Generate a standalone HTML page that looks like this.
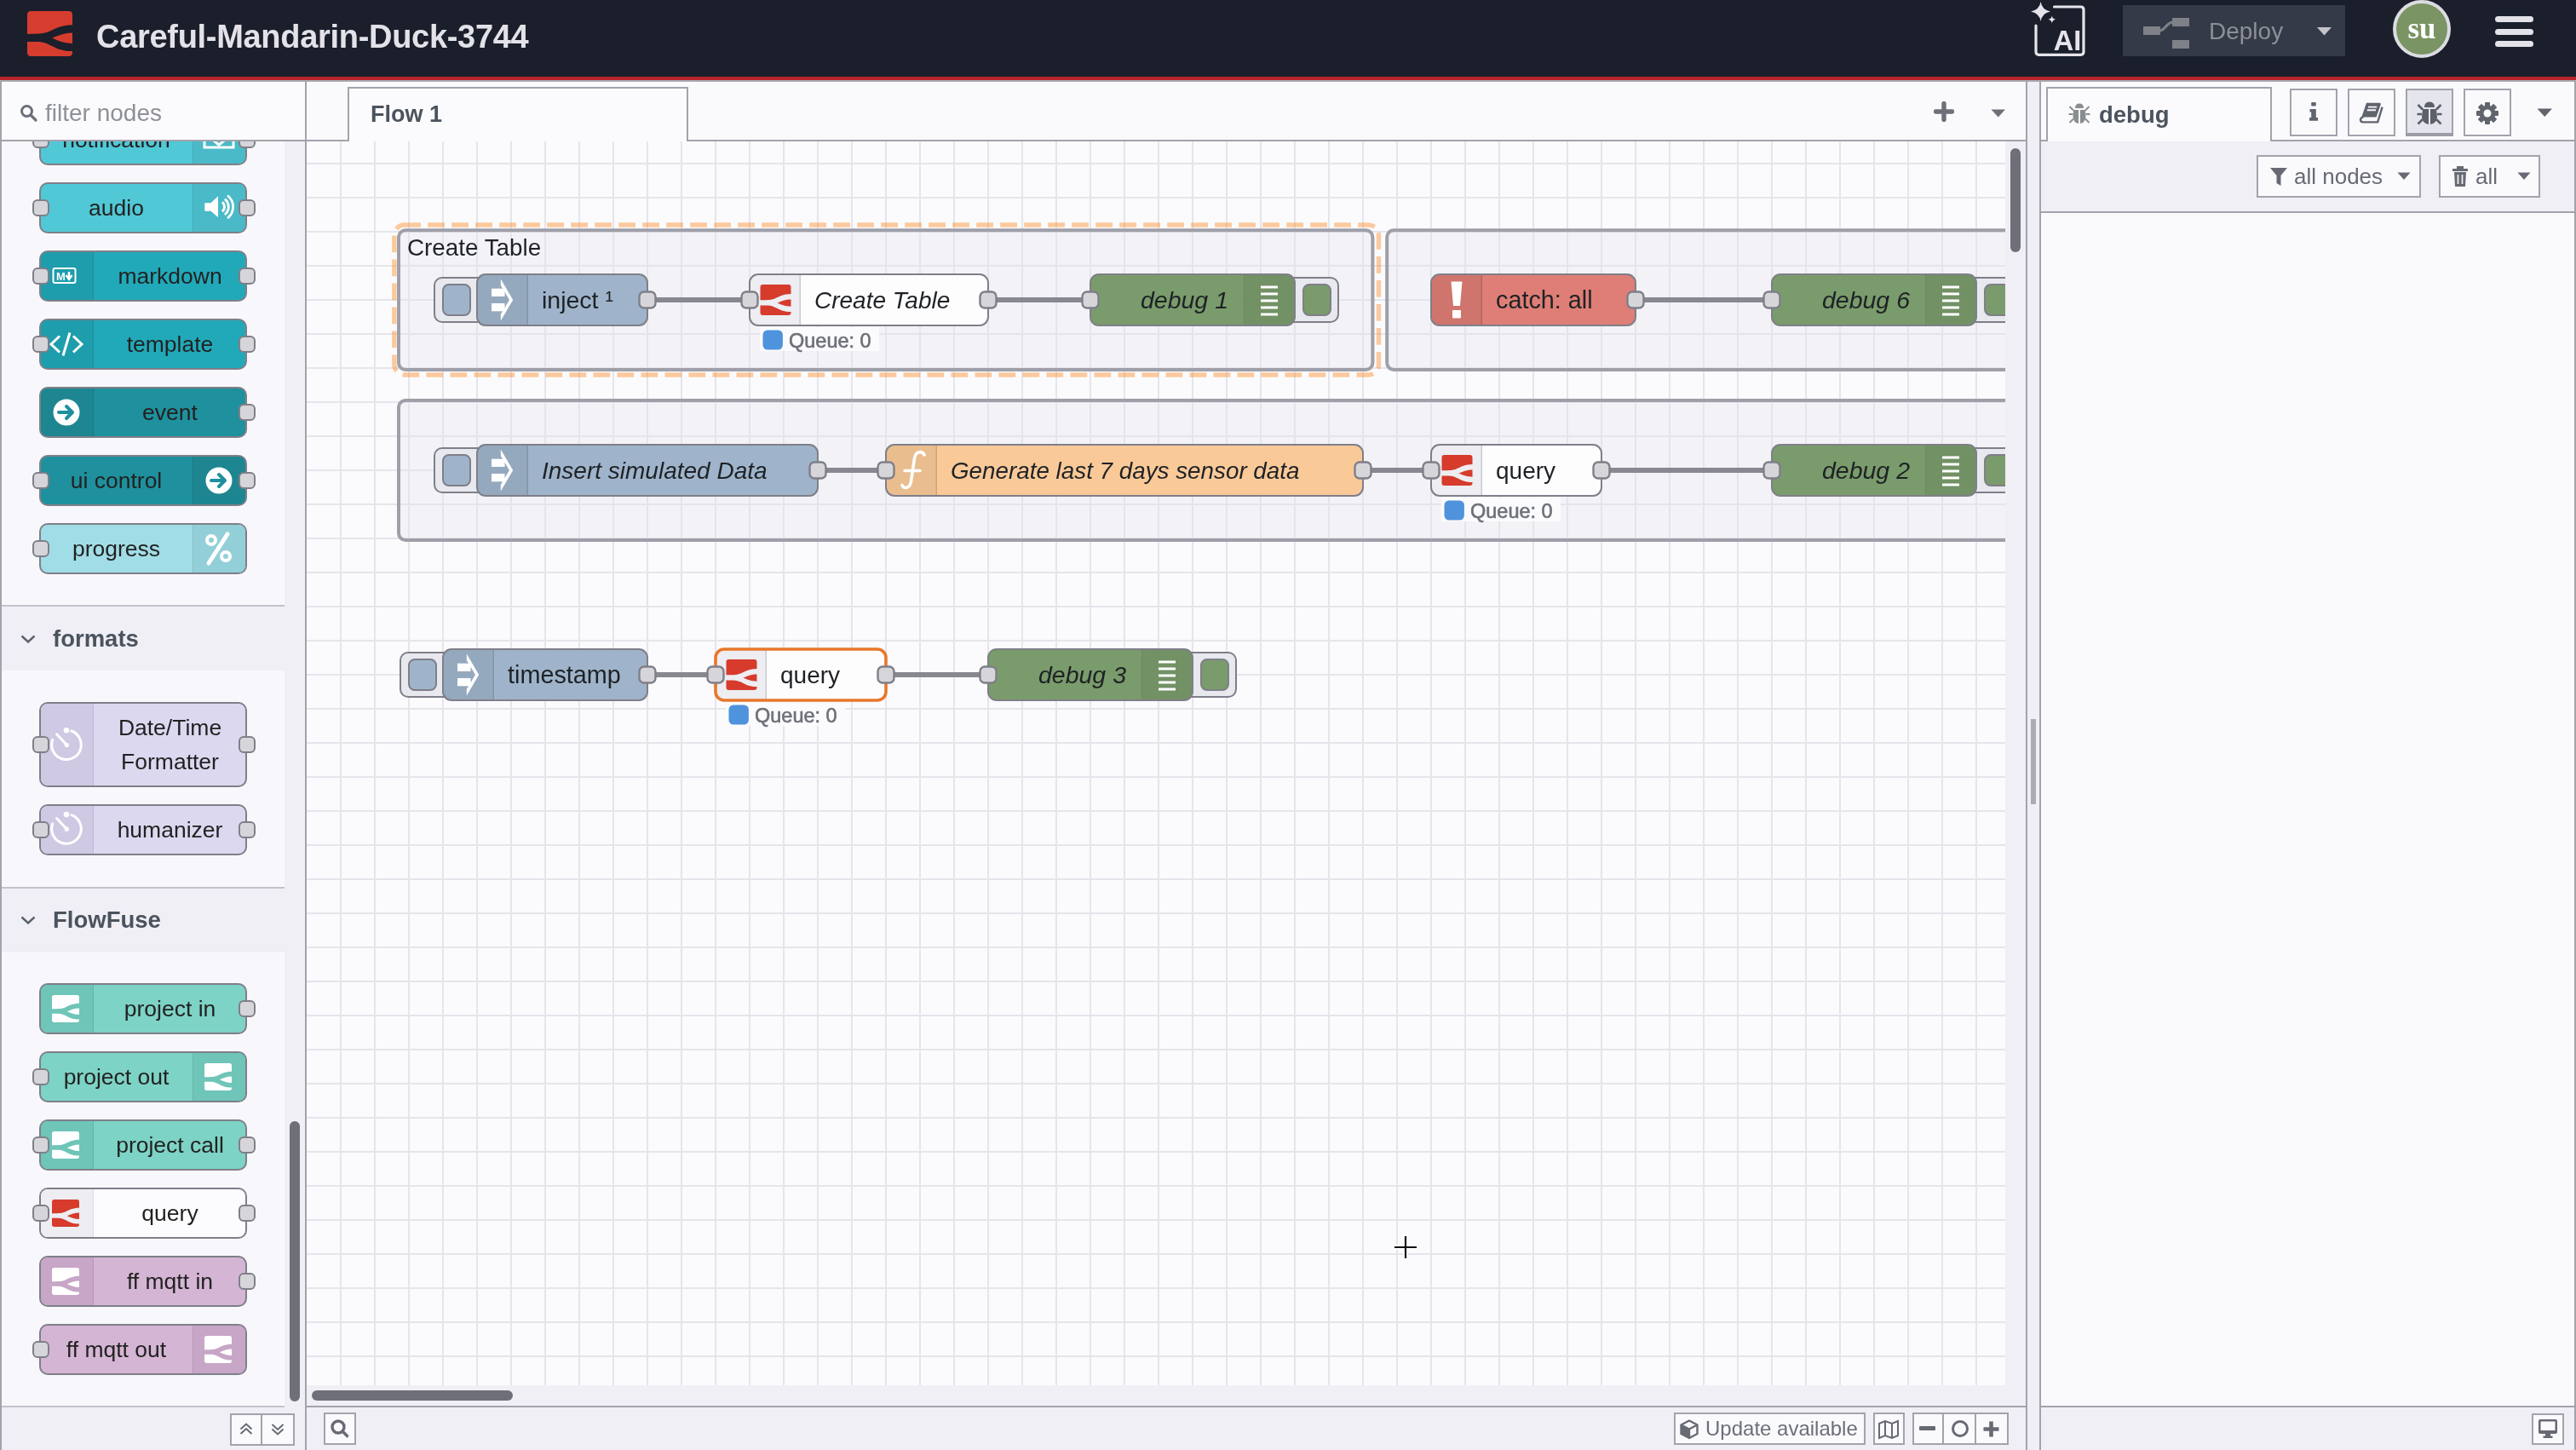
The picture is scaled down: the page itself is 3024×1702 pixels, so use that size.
<!DOCTYPE html>
<html><head><meta charset="utf-8"><style>
html,body{margin:0;padding:0;width:3024px;height:1702px;overflow:hidden;background:#f8f8fc;font-family:'Liberation Sans', sans-serif}
body>div,body>svg{will-change:transform}
</style></head><body>
<div style="position:absolute;left:0;top:0;width:3024px;height:90px;background:#1a1f2b;"></div>
<div style="position:absolute;left:0;top:90px;width:3024px;height:4px;background:#b9232b;"></div>
<svg style="position:absolute;left:32px;top:13px" width="53" height="53" viewBox="0 0 36 36"><g transform="translate(0,0) scale(1.0)" fill="#d63d2e"><path d="M0,3 Q0,0 3,0 L33,0 Q36,0 36,3 L36,11 C28,11 22,14 18,16 C14,18 10,18.3 0,18.3 Z"/><path d="M36,17.4 C30,17.4 24,19.6 20,21.6 C24,23.6 30,25.8 36,25.8 Z"/><path d="M0,24.4 L8,24.4 C13,24.4 16,26 20,28 C24,30 28,32 36,32 L36,33 Q36,36 33,36 L3,36 Q0,36 0,33 Z"/></g></svg>
<div style="position:absolute;left:113px;top:15px;height:56px;font:bold 38px 'Liberation Sans', sans-serif;line-height:56px;letter-spacing:-0.3px;color:#e2e2e8;white-space:nowrap">Careful-Mandarin-Duck-3744</div>

<svg style="position:absolute;left:2380px;top:0px" width="72" height="70" viewBox="0 0 72 70">
<path d="M15.6,2 Q17,11.5 27,13.4 Q17,15.3 15.6,25 Q14.2,15.3 4,13.4 Q14.2,11.5 15.6,2 Z" fill="#e4e4ea"/>
<path d="M28.8,18.5 Q29.4,22.2 33.3,22.8 Q29.4,23.4 28.8,27.2 Q28.2,23.4 24.3,22.8 Q28.2,22.2 28.8,18.5 Z" fill="#e4e4ea"/>
<path d="M31.5,8 L62.5,8 Q66,8 66,11.5 L66,60.8 Q66,64.3 62.5,64.3 L13.5,64.3 Q10,64.3 10,60.8 L10,30" fill="none" stroke="#e4e4ea" stroke-width="3.2" stroke-linecap="round"/>
<text x="47" y="59" text-anchor="middle" font-family="Liberation Sans" font-weight="bold" font-size="32.5" fill="#e4e4ea">AI</text>
</svg>
<div style="position:absolute;left:2492px;top:6px;width:261px;height:60px;background:#343a47;"></div>
<svg style="position:absolute;left:2510px;top:15px" width="70" height="48" viewBox="0 0 70 48">
<rect x="6" y="16" width="20" height="10" fill="#7f8188"/>
<rect x="40" y="6" width="20" height="10" fill="#7f8188"/>
<rect x="40" y="32" width="20" height="10" fill="#7f8188"/>
<path d="M25,21 C32,21 33,11 41,11" stroke="#7f8188" stroke-width="3" fill="none"/>
</svg>
<div style="position:absolute;left:2593px;top:15px;height:44px;font:28px 'Liberation Sans', sans-serif;line-height:44px;color:#8e9097">Deploy</div>
<svg style="position:absolute;left:2720px;top:32px" width="18" height="11"><path d="M0,0 L17,0 L8.5,9.5 Z" fill="#c3c3ca"/></svg>

<div style="position:absolute;left:2809px;top:0px;width:68px;height:68px;border-radius:50%;box-sizing:border-box;border:4px solid #dcdce2;background:#7a9463;"></div>
<div style="position:absolute;left:2809px;top:12px;width:68px;height:44px;text-align:center;font:bold 35px 'Liberation Serif', serif;line-height:44px;color:#fff">su</div>
<div style="position:absolute;left:2929px;top:19px;width:45px;height:7px;border-radius:4px;background:#e2e2e8"></div>
<div style="position:absolute;left:2929px;top:33.7px;width:45px;height:7px;border-radius:4px;background:#e2e2e8"></div>
<div style="position:absolute;left:2929px;top:48.4px;width:45px;height:7px;border-radius:4px;background:#e2e2e8"></div>

<div style="position:absolute;left:0;top:94px;width:359px;height:1608px;background:#f8f8fc;"></div>
<div style="position:absolute;left:0;top:94px;width:2px;height:1608px;background:#a3a3ad;"></div>
<div style="position:absolute;left:358px;top:94px;width:2px;height:1608px;background:#a3a3ad;"></div>

<div style="position:absolute;left:2px;top:166px;width:355px;height:1484px;overflow:hidden">
<div style="position:absolute;left:-2px;top:-166px;width:359px;height:1702px;">
<div style="position:absolute;left:2px;top:710px;width:332px;height:2px;background:#c3c3cc"></div>
<div style="position:absolute;left:2px;top:712px;width:332px;height:75px;background:#efeff5"></div>
<svg style="position:absolute;left:24px;top:745px" width="18" height="10"><path d="M1.5,1.5 L9,8.5 L16.5,1.5" fill="none" stroke="#5a616b" stroke-width="2.4"/></svg>
<div style="position:absolute;left:62px;top:730px;height:40px;font:bold 27.5px 'Liberation Sans', sans-serif;line-height:40px;color:#4b535e;white-space:nowrap">formats</div>
<div style="position:absolute;left:2px;top:1040.5px;width:332px;height:2px;background:#c3c3cc"></div>
<div style="position:absolute;left:2px;top:1042.5px;width:332px;height:75.09999999999991px;background:#efeff5"></div>
<svg style="position:absolute;left:24px;top:1074.7px" width="18" height="10"><path d="M1.5,1.5 L9,8.5 L16.5,1.5" fill="none" stroke="#5a616b" stroke-width="2.4"/></svg>
<div style="position:absolute;left:62px;top:1059.7px;height:40px;font:bold 27.5px 'Liberation Sans', sans-serif;line-height:40px;color:#4b535e;white-space:nowrap">FlowFuse</div>
<div style="position:absolute;left:46px;top:134px;width:244px;height:60px;box-sizing:border-box;border:2px solid #7f7f89;border-radius:10px;background:#50c8d6;overflow:hidden"><div style="position:absolute;right:0;top:0;width:61px;height:100%;background:#4abac8;border-left:1px solid rgba(0,0,0,0.08)"></div><svg style="position:absolute;right:0;top:0" width="61" height="56" viewBox="0 0 61 56"><rect x="13" y="-4" width="34" height="41.0" fill="none" stroke="#fff" stroke-width="3"/><path d="M20,26.0 L30,34.0 L40,26.0" stroke="#fff" stroke-width="3" fill="none"/></svg><div style="position:absolute;left:0px;top:0;width:177px;height:100%;text-align:center;font:26.5px 'Liberation Sans', sans-serif;line-height:56px;color:#222;white-space:nowrap">notification</div></div><div style="position:absolute;left:38px;top:154.0px;width:20px;height:20px;box-sizing:border-box;border:2px solid #7f7f89;border-radius:6px;background:#d6d6da"></div><div style="position:absolute;left:280px;top:154.0px;width:20px;height:20px;box-sizing:border-box;border:2px solid #7f7f89;border-radius:6px;background:#d6d6da"></div>
<div style="position:absolute;left:46px;top:214px;width:244px;height:60px;box-sizing:border-box;border:2px solid #7f7f89;border-radius:10px;background:#50c8d6;overflow:hidden"><div style="position:absolute;right:0;top:0;width:61px;height:100%;background:#4abac8;border-left:1px solid rgba(0,0,0,0.08)"></div><svg style="position:absolute;right:0;top:0" width="61" height="56" viewBox="0 0 61 56"><path d="M13.3,22.200000000000003 L20.5,22.200000000000003 L29,14.3 L29,39.1 L20.5,31.8 L13.3,31.8 Z" fill="#fff"/><path d="M33.89,21.44 A6.8,6.8 0 0 1 33.89,32.160000000000004 M36.84,17.66 A11.6,11.6 0 0 1 36.84,35.94 M40.10,13.48 A16.9,16.9 0 0 1 40.10,40.120000000000005" fill="none" stroke="#fff" stroke-width="2.8"/></svg><div style="position:absolute;left:0px;top:0;width:177px;height:100%;text-align:center;font:26.5px 'Liberation Sans', sans-serif;line-height:56px;color:#222;white-space:nowrap">audio</div></div><div style="position:absolute;left:38px;top:234.0px;width:20px;height:20px;box-sizing:border-box;border:2px solid #7f7f89;border-radius:6px;background:#d6d6da"></div><div style="position:absolute;left:280px;top:234.0px;width:20px;height:20px;box-sizing:border-box;border:2px solid #7f7f89;border-radius:6px;background:#d6d6da"></div>
<div style="position:absolute;left:46px;top:294px;width:244px;height:60px;box-sizing:border-box;border:2px solid #7f7f89;border-radius:10px;background:#21a9b9;overflow:hidden"><div style="position:absolute;left:0;top:0;width:61px;height:100%;background:#1e9dac;border-right:1px solid rgba(0,0,0,0.08)"></div><svg style="position:absolute;left:0;top:0" width="61" height="56" viewBox="0 0 61 56"><g><rect x="14.5" y="19.0" width="26" height="17" rx="2" fill="none" stroke="#fff" stroke-width="2"/><text x="18" y="33.0" font-family="Liberation Sans" font-weight="bold" font-size="13" fill="#fff">M</text><path d="M33,23.0 L33,30.0 M29.5,27.0 L33,32.0 L36.5,27.0" stroke="#fff" stroke-width="2.4" fill="none"/></g></svg><div style="position:absolute;left:63px;top:0;width:177px;height:100%;text-align:center;font:26.5px 'Liberation Sans', sans-serif;line-height:56px;color:#222;white-space:nowrap">markdown</div></div><div style="position:absolute;left:38px;top:314.0px;width:20px;height:20px;box-sizing:border-box;border:2px solid #7f7f89;border-radius:6px;background:#d6d6da"></div><div style="position:absolute;left:280px;top:314.0px;width:20px;height:20px;box-sizing:border-box;border:2px solid #7f7f89;border-radius:6px;background:#d6d6da"></div>
<div style="position:absolute;left:46px;top:374px;width:244px;height:60px;box-sizing:border-box;border:2px solid #7f7f89;border-radius:10px;background:#21a9b9;overflow:hidden"><div style="position:absolute;left:0;top:0;width:61px;height:100%;background:#1e9dac;border-right:1px solid rgba(0,0,0,0.08)"></div><svg style="position:absolute;left:0;top:0" width="61" height="56" viewBox="0 0 61 56"><g fill="none" stroke="#fff" stroke-width="3"><path d="M22,18.5 L12,28.0 L22,37.5"/><path d="M34,14.5 L26,41.5"/><path d="M38,18.5 L48,28.0 L38,37.5"/></g></svg><div style="position:absolute;left:63px;top:0;width:177px;height:100%;text-align:center;font:26.5px 'Liberation Sans', sans-serif;line-height:56px;color:#222;white-space:nowrap">template</div></div><div style="position:absolute;left:38px;top:394.0px;width:20px;height:20px;box-sizing:border-box;border:2px solid #7f7f89;border-radius:6px;background:#d6d6da"></div><div style="position:absolute;left:280px;top:394.0px;width:20px;height:20px;box-sizing:border-box;border:2px solid #7f7f89;border-radius:6px;background:#d6d6da"></div>
<div style="position:absolute;left:46px;top:454px;width:244px;height:60px;box-sizing:border-box;border:2px solid #7f7f89;border-radius:10px;background:#1f909d;overflow:hidden"><div style="position:absolute;left:0;top:0;width:61px;height:100%;background:#1d8691;border-right:1px solid rgba(0,0,0,0.08)"></div><svg style="position:absolute;left:0;top:0" width="61" height="56" viewBox="0 0 61 56"><g><circle cx="30" cy="28.0" r="15.5" fill="#fff"/><path d="M21,28.0 L36,28.0 M30,21.0 L37,28.0 L30,35.0" stroke="#1f8f9c" stroke-width="4" fill="none" stroke-linecap="round" stroke-linejoin="round"/></g></svg><div style="position:absolute;left:63px;top:0;width:177px;height:100%;text-align:center;font:26.5px 'Liberation Sans', sans-serif;line-height:56px;color:#222;white-space:nowrap">event</div></div><div style="position:absolute;left:280px;top:474.0px;width:20px;height:20px;box-sizing:border-box;border:2px solid #7f7f89;border-radius:6px;background:#d6d6da"></div>
<div style="position:absolute;left:46px;top:534px;width:244px;height:60px;box-sizing:border-box;border:2px solid #7f7f89;border-radius:10px;background:#1f909d;overflow:hidden"><div style="position:absolute;right:0;top:0;width:61px;height:100%;background:#1d8691;border-left:1px solid rgba(0,0,0,0.08)"></div><svg style="position:absolute;right:0;top:0" width="61" height="56" viewBox="0 0 61 56"><g><circle cx="30" cy="28.0" r="15.5" fill="#fff"/><path d="M21,28.0 L36,28.0 M30,21.0 L37,28.0 L30,35.0" stroke="#1f8f9c" stroke-width="4" fill="none" stroke-linecap="round" stroke-linejoin="round"/></g></svg><div style="position:absolute;left:0px;top:0;width:177px;height:100%;text-align:center;font:26.5px 'Liberation Sans', sans-serif;line-height:56px;color:#222;white-space:nowrap">ui control</div></div><div style="position:absolute;left:38px;top:554.0px;width:20px;height:20px;box-sizing:border-box;border:2px solid #7f7f89;border-radius:6px;background:#d6d6da"></div><div style="position:absolute;left:280px;top:554.0px;width:20px;height:20px;box-sizing:border-box;border:2px solid #7f7f89;border-radius:6px;background:#d6d6da"></div>
<div style="position:absolute;left:46px;top:614px;width:244px;height:60px;box-sizing:border-box;border:2px solid #7f7f89;border-radius:10px;background:#a1dde6;overflow:hidden"><div style="position:absolute;right:0;top:0;width:61px;height:100%;background:#93cfd8;border-left:1px solid rgba(0,0,0,0.08)"></div><svg style="position:absolute;right:0;top:0" width="61" height="56" viewBox="0 0 61 56"><g><path d="M40,11.0 L18,45.0" stroke="#fff" stroke-width="5" stroke-linecap="round"/><circle cx="21" cy="18.0" r="5" fill="none" stroke="#fff" stroke-width="4"/><circle cx="38" cy="37.0" r="5" fill="none" stroke="#fff" stroke-width="4"/></g></svg><div style="position:absolute;left:0px;top:0;width:177px;height:100%;text-align:center;font:26.5px 'Liberation Sans', sans-serif;line-height:56px;color:#222;white-space:nowrap">progress</div></div><div style="position:absolute;left:38px;top:634.0px;width:20px;height:20px;box-sizing:border-box;border:2px solid #7f7f89;border-radius:6px;background:#d6d6da"></div>
<div style="position:absolute;left:46px;top:824px;width:244px;height:100px;box-sizing:border-box;border:2px solid #7f7f89;border-radius:10px;background:#dcd8f0;overflow:hidden"><div style="position:absolute;left:0;top:0;width:61px;height:100%;background:#cfc9e4;border-right:1px solid rgba(0,0,0,0.08)"></div><svg style="position:absolute;left:0;top:0" width="61" height="96" viewBox="0 0 61 96"><g fill="none" stroke="#fff" stroke-width="3"><path d="M35.9,31.999999999999996 A17.3,17.3 0 1 1 13.7,42.4" stroke-linecap="round"/><path d="M18.5,35.8 L30.2,48.3" stroke-linecap="round"/></g><circle cx="30" cy="31.299999999999997" r="3.3" fill="#fff"/><circle cx="30.3" cy="48.5" r="2.6" fill="#fff"/></svg><div style="position:absolute;left:63px;top:0;width:177px;height:100%;display:flex;align-items:center;justify-content:center;text-align:center;font:26.5px 'Liberation Sans', sans-serif;line-height:40px;color:#222">Date/Time<br>Formatter</div></div><div style="position:absolute;left:38px;top:864.0px;width:20px;height:20px;box-sizing:border-box;border:2px solid #7f7f89;border-radius:6px;background:#d6d6da"></div><div style="position:absolute;left:280px;top:864.0px;width:20px;height:20px;box-sizing:border-box;border:2px solid #7f7f89;border-radius:6px;background:#d6d6da"></div>
<div style="position:absolute;left:46px;top:944px;width:244px;height:60px;box-sizing:border-box;border:2px solid #7f7f89;border-radius:10px;background:#dcd8f0;overflow:hidden"><div style="position:absolute;left:0;top:0;width:61px;height:100%;background:#cfc9e4;border-right:1px solid rgba(0,0,0,0.08)"></div><svg style="position:absolute;left:0;top:0" width="61" height="56" viewBox="0 0 61 56"><g fill="none" stroke="#fff" stroke-width="3"><path d="M35.9,10.7 A17.3,17.3 0 1 1 13.7,21.1" stroke-linecap="round"/><path d="M18.5,14.5 L30.2,27.0" stroke-linecap="round"/></g><circle cx="30" cy="10.0" r="3.3" fill="#fff"/><circle cx="30.3" cy="27.2" r="2.6" fill="#fff"/></svg><div style="position:absolute;left:63px;top:0;width:177px;height:100%;text-align:center;font:26.5px 'Liberation Sans', sans-serif;line-height:56px;color:#222;white-space:nowrap">humanizer</div></div><div style="position:absolute;left:38px;top:964.0px;width:20px;height:20px;box-sizing:border-box;border:2px solid #7f7f89;border-radius:6px;background:#d6d6da"></div><div style="position:absolute;left:280px;top:964.0px;width:20px;height:20px;box-sizing:border-box;border:2px solid #7f7f89;border-radius:6px;background:#d6d6da"></div>
<div style="position:absolute;left:46px;top:1154px;width:244px;height:60px;box-sizing:border-box;border:2px solid #7f7f89;border-radius:10px;background:#7dd3c5;overflow:hidden"><div style="position:absolute;left:0;top:0;width:61px;height:100%;background:#6ec5b8;border-right:1px solid rgba(0,0,0,0.08)"></div><svg style="position:absolute;left:0;top:0" width="61" height="56" viewBox="0 0 61 56"><g transform="translate(13,12.0)"><svg width="32" height="32" viewBox="0 0 36 36"><g transform="translate(0,0) scale(1.0)" fill="#fff"><path d="M0,3 Q0,0 3,0 L33,0 Q36,0 36,3 L36,11 C28,11 22,14 18,16 C14,18 10,18.3 0,18.3 Z"/><path d="M36,17.4 C30,17.4 24,19.6 20,21.6 C24,23.6 30,25.8 36,25.8 Z"/><path d="M0,24.4 L8,24.4 C13,24.4 16,26 20,28 C24,30 28,32 36,32 L36,33 Q36,36 33,36 L3,36 Q0,36 0,33 Z"/></g></svg></g></svg><div style="position:absolute;left:63px;top:0;width:177px;height:100%;text-align:center;font:26.5px 'Liberation Sans', sans-serif;line-height:56px;color:#222;white-space:nowrap">project in</div></div><div style="position:absolute;left:280px;top:1174.0px;width:20px;height:20px;box-sizing:border-box;border:2px solid #7f7f89;border-radius:6px;background:#d6d6da"></div>
<div style="position:absolute;left:46px;top:1234px;width:244px;height:60px;box-sizing:border-box;border:2px solid #7f7f89;border-radius:10px;background:#7dd3c5;overflow:hidden"><div style="position:absolute;right:0;top:0;width:61px;height:100%;background:#6ec5b8;border-left:1px solid rgba(0,0,0,0.08)"></div><svg style="position:absolute;right:0;top:0" width="61" height="56" viewBox="0 0 61 56"><g transform="translate(13,12.0)"><svg width="32" height="32" viewBox="0 0 36 36"><g transform="translate(0,0) scale(1.0)" fill="#fff"><path d="M0,3 Q0,0 3,0 L33,0 Q36,0 36,3 L36,11 C28,11 22,14 18,16 C14,18 10,18.3 0,18.3 Z"/><path d="M36,17.4 C30,17.4 24,19.6 20,21.6 C24,23.6 30,25.8 36,25.8 Z"/><path d="M0,24.4 L8,24.4 C13,24.4 16,26 20,28 C24,30 28,32 36,32 L36,33 Q36,36 33,36 L3,36 Q0,36 0,33 Z"/></g></svg></g></svg><div style="position:absolute;left:0px;top:0;width:177px;height:100%;text-align:center;font:26.5px 'Liberation Sans', sans-serif;line-height:56px;color:#222;white-space:nowrap">project out</div></div><div style="position:absolute;left:38px;top:1254.0px;width:20px;height:20px;box-sizing:border-box;border:2px solid #7f7f89;border-radius:6px;background:#d6d6da"></div>
<div style="position:absolute;left:46px;top:1314px;width:244px;height:60px;box-sizing:border-box;border:2px solid #7f7f89;border-radius:10px;background:#7dd3c5;overflow:hidden"><div style="position:absolute;left:0;top:0;width:61px;height:100%;background:#6ec5b8;border-right:1px solid rgba(0,0,0,0.08)"></div><svg style="position:absolute;left:0;top:0" width="61" height="56" viewBox="0 0 61 56"><g transform="translate(13,12.0)"><svg width="32" height="32" viewBox="0 0 36 36"><g transform="translate(0,0) scale(1.0)" fill="#fff"><path d="M0,3 Q0,0 3,0 L33,0 Q36,0 36,3 L36,11 C28,11 22,14 18,16 C14,18 10,18.3 0,18.3 Z"/><path d="M36,17.4 C30,17.4 24,19.6 20,21.6 C24,23.6 30,25.8 36,25.8 Z"/><path d="M0,24.4 L8,24.4 C13,24.4 16,26 20,28 C24,30 28,32 36,32 L36,33 Q36,36 33,36 L3,36 Q0,36 0,33 Z"/></g></svg></g></svg><div style="position:absolute;left:63px;top:0;width:177px;height:100%;text-align:center;font:26.5px 'Liberation Sans', sans-serif;line-height:56px;color:#222;white-space:nowrap">project call</div></div><div style="position:absolute;left:38px;top:1334.0px;width:20px;height:20px;box-sizing:border-box;border:2px solid #7f7f89;border-radius:6px;background:#d6d6da"></div><div style="position:absolute;left:280px;top:1334.0px;width:20px;height:20px;box-sizing:border-box;border:2px solid #7f7f89;border-radius:6px;background:#d6d6da"></div>
<div style="position:absolute;left:46px;top:1394px;width:244px;height:60px;box-sizing:border-box;border:2px solid #7f7f89;border-radius:10px;background:#fcfcfe;overflow:hidden"><div style="position:absolute;left:0;top:0;width:61px;height:100%;background:#ededf2;border-right:1px solid rgba(0,0,0,0.08)"></div><svg style="position:absolute;left:0;top:0" width="61" height="56" viewBox="0 0 61 56"><g transform="translate(13,12.0)"><svg width="32" height="32" viewBox="0 0 36 36"><g transform="translate(0,0) scale(1.0)" fill="#d63b2c"><path d="M0,3 Q0,0 3,0 L33,0 Q36,0 36,3 L36,11 C28,11 22,14 18,16 C14,18 10,18.3 0,18.3 Z"/><path d="M36,17.4 C30,17.4 24,19.6 20,21.6 C24,23.6 30,25.8 36,25.8 Z"/><path d="M0,24.4 L8,24.4 C13,24.4 16,26 20,28 C24,30 28,32 36,32 L36,33 Q36,36 33,36 L3,36 Q0,36 0,33 Z"/></g></svg></g></svg><div style="position:absolute;left:63px;top:0;width:177px;height:100%;text-align:center;font:26.5px 'Liberation Sans', sans-serif;line-height:56px;color:#222;white-space:nowrap">query</div></div><div style="position:absolute;left:38px;top:1414.0px;width:20px;height:20px;box-sizing:border-box;border:2px solid #7f7f89;border-radius:6px;background:#d6d6da"></div><div style="position:absolute;left:280px;top:1414.0px;width:20px;height:20px;box-sizing:border-box;border:2px solid #7f7f89;border-radius:6px;background:#d6d6da"></div>
<div style="position:absolute;left:46px;top:1474px;width:244px;height:60px;box-sizing:border-box;border:2px solid #7f7f89;border-radius:10px;background:#d4b6d4;overflow:hidden"><div style="position:absolute;left:0;top:0;width:61px;height:100%;background:#c7a6c7;border-right:1px solid rgba(0,0,0,0.08)"></div><svg style="position:absolute;left:0;top:0" width="61" height="56" viewBox="0 0 61 56"><g transform="translate(13,12.0)"><svg width="32" height="32" viewBox="0 0 36 36"><g transform="translate(0,0) scale(1.0)" fill="#fff"><path d="M0,3 Q0,0 3,0 L33,0 Q36,0 36,3 L36,11 C28,11 22,14 18,16 C14,18 10,18.3 0,18.3 Z"/><path d="M36,17.4 C30,17.4 24,19.6 20,21.6 C24,23.6 30,25.8 36,25.8 Z"/><path d="M0,24.4 L8,24.4 C13,24.4 16,26 20,28 C24,30 28,32 36,32 L36,33 Q36,36 33,36 L3,36 Q0,36 0,33 Z"/></g></svg></g></svg><div style="position:absolute;left:63px;top:0;width:177px;height:100%;text-align:center;font:26.5px 'Liberation Sans', sans-serif;line-height:56px;color:#222;white-space:nowrap">ff mqtt in</div></div><div style="position:absolute;left:280px;top:1494.0px;width:20px;height:20px;box-sizing:border-box;border:2px solid #7f7f89;border-radius:6px;background:#d6d6da"></div>
<div style="position:absolute;left:46px;top:1554px;width:244px;height:60px;box-sizing:border-box;border:2px solid #7f7f89;border-radius:10px;background:#d4b6d4;overflow:hidden"><div style="position:absolute;right:0;top:0;width:61px;height:100%;background:#c7a6c7;border-left:1px solid rgba(0,0,0,0.08)"></div><svg style="position:absolute;right:0;top:0" width="61" height="56" viewBox="0 0 61 56"><g transform="translate(13,12.0)"><svg width="32" height="32" viewBox="0 0 36 36"><g transform="translate(0,0) scale(1.0)" fill="#fff"><path d="M0,3 Q0,0 3,0 L33,0 Q36,0 36,3 L36,11 C28,11 22,14 18,16 C14,18 10,18.3 0,18.3 Z"/><path d="M36,17.4 C30,17.4 24,19.6 20,21.6 C24,23.6 30,25.8 36,25.8 Z"/><path d="M0,24.4 L8,24.4 C13,24.4 16,26 20,28 C24,30 28,32 36,32 L36,33 Q36,36 33,36 L3,36 Q0,36 0,33 Z"/></g></svg></g></svg><div style="position:absolute;left:0px;top:0;width:177px;height:100%;text-align:center;font:26.5px 'Liberation Sans', sans-serif;line-height:56px;color:#222;white-space:nowrap">ff mqtt out</div></div><div style="position:absolute;left:38px;top:1574.0px;width:20px;height:20px;box-sizing:border-box;border:2px solid #7f7f89;border-radius:6px;background:#d6d6da"></div>
</div></div>
<div style="position:absolute;left:334px;top:166px;width:24px;height:1484px;background:#efeff5"></div>
<div style="position:absolute;left:340px;top:1316px;width:12px;height:329px;border-radius:6px;background:#6f6f7a"></div>

<div style="position:absolute;left:2px;top:94px;width:356px;height:70px;background:#fbfbfd"></div>
<div style="position:absolute;left:2px;top:164px;width:356px;height:2px;background:#a3a3ad"></div>
<svg style="position:absolute;left:23px;top:122px" width="22" height="22" viewBox="0 0 22 22"><circle cx="8.5" cy="8.5" r="6" fill="none" stroke="#6c707a" stroke-width="3"/><path d="M13,13 L19,19" stroke="#6c707a" stroke-width="3.2" stroke-linecap="round"/></svg>
<div style="position:absolute;left:53px;top:113px;height:40px;font:28px 'Liberation Sans', sans-serif;line-height:40px;color:#8e9097">filter nodes</div>

<div style="position:absolute;left:2px;top:1650px;width:356px;height:52px;background:#efeff5"></div>
<div style="position:absolute;left:2px;top:1650px;width:332px;height:2px;background:#c3c3cc"></div>
<div style="position:absolute;left:270px;top:1659px;width:76px;height:38px;box-sizing:border-box;border:2px solid #a3a3ad;background:#fafafd"></div>
<div style="position:absolute;left:306px;top:1659px;width:2px;height:38px;background:#a3a3ad"></div>
<svg style="position:absolute;left:280px;top:1669px" width="18" height="18" viewBox="0 0 18 18"><path d="M2.5,8.5 L9,2.5 L15.5,8.5 M2.5,14 L9,8 L15.5,14" fill="none" stroke="#676a73" stroke-width="2"/></svg>
<svg style="position:absolute;left:317px;top:1669px" width="18" height="18" viewBox="0 0 18 18"><path d="M2.5,3 L9,9 L15.5,3 M2.5,8.5 L9,14.5 L15.5,8.5" fill="none" stroke="#676a73" stroke-width="2"/></svg>

<div style="position:absolute;left:360px;top:94px;width:2018px;height:70px;background:#fafafd"></div>
<div style="position:absolute;left:360px;top:164px;width:2018px;height:2px;background:#a3a3ad"></div>
<div style="position:absolute;left:407.5px;top:102px;width:400px;height:64px;box-sizing:border-box;border:2px solid #a3a3ad;border-bottom:none;background:#fbfbfd"></div>
<div style="position:absolute;left:435px;top:114px;height:40px;font:bold 27px 'Liberation Sans', sans-serif;line-height:40px;color:#4b535e">Flow 1</div>
<svg style="position:absolute;left:2270px;top:119px" width="24" height="24" viewBox="0 0 24 24"><path d="M12,2.5 L12,21.5 M2.5,12 L21.5,12" stroke="#6e7079" stroke-width="5.4" stroke-linecap="round"/></svg>
<svg style="position:absolute;left:2337px;top:128px" width="18" height="10"><path d="M0.5,0.5 L17,0.5 L8.75,9.5 Z" fill="#6e7079"/></svg>

<svg style="position:absolute;left:360px;top:166px" width="1994" height="1460" viewBox="360 166 1994 1460">
<rect x="360" y="166" width="1994" height="1460" fill="#fbfbfd"/>
<path d="M400,166V1626M440,166V1626M480,166V1626M520,166V1626M560,166V1626M600,166V1626M640,166V1626M680,166V1626M720,166V1626M760,166V1626M800,166V1626M840,166V1626M880,166V1626M920,166V1626M960,166V1626M1000,166V1626M1040,166V1626M1080,166V1626M1120,166V1626M1160,166V1626M1200,166V1626M1240,166V1626M1280,166V1626M1320,166V1626M1360,166V1626M1400,166V1626M1440,166V1626M1480,166V1626M1520,166V1626M1560,166V1626M1600,166V1626M1640,166V1626M1680,166V1626M1720,166V1626M1760,166V1626M1800,166V1626M1840,166V1626M1880,166V1626M1920,166V1626M1960,166V1626M2000,166V1626M2040,166V1626M2080,166V1626M2120,166V1626M2160,166V1626M2200,166V1626M2240,166V1626M2280,166V1626M2320,166V1626M360,192H2354M360,232H2354M360,272H2354M360,312H2354M360,352H2354M360,392H2354M360,432H2354M360,472H2354M360,512H2354M360,552H2354M360,592H2354M360,632H2354M360,672H2354M360,712H2354M360,752H2354M360,792H2354M360,832H2354M360,872H2354M360,912H2354M360,952H2354M360,992H2354M360,1032H2354M360,1072H2354M360,1112H2354M360,1152H2354M360,1192H2354M360,1232H2354M360,1272H2354M360,1312H2354M360,1352H2354M360,1392H2354M360,1432H2354M360,1472H2354M360,1512H2354M360,1552H2354M360,1592H2354" stroke="#e5e5ec" stroke-width="2" fill="none"/>
<rect x="462.8" y="264" width="1155.7" height="176" rx="12" fill="none" stroke="#ff7f0e" stroke-opacity="0.4" stroke-width="5.4" stroke-dasharray="19.8 8.2" stroke-dashoffset="0.6" stroke-linejoin="round"/>
<rect x="468" y="270.2" width="1143.4" height="163.8" rx="8" fill="#e4e4ec" fill-opacity="0.32" stroke="#9f9fa9" stroke-width="4"/>
<text x="478" y="299.8" font-family="Liberation Sans" font-size="27.8" fill="#1f2226">Create Table</text>
<rect x="1628.2" y="270.2" width="1000" height="163.8" rx="8" fill="#e4e4ec" fill-opacity="0.32" stroke="#9f9fa9" stroke-width="4"/>
<rect x="468" y="470" width="2000" height="164" rx="8" fill="#e4e4ec" fill-opacity="0.32" stroke="#9f9fa9" stroke-width="4"/>
<path d="M760,352 H880" stroke="#888891" stroke-width="6" fill="none"/>
<path d="M1160,352 H1280" stroke="#888891" stroke-width="6" fill="none"/>
<path d="M1920,352 H2080" stroke="#888891" stroke-width="6" fill="none"/>
<path d="M960,552 H1040" stroke="#888891" stroke-width="6" fill="none"/>
<path d="M1600,552 H1680" stroke="#888891" stroke-width="6" fill="none"/>
<path d="M1880,552 H2080" stroke="#888891" stroke-width="6" fill="none"/>
<path d="M760,792 H840" stroke="#888891" stroke-width="6" fill="none"/>
<path d="M1040,792 H1160" stroke="#888891" stroke-width="6" fill="none"/>
<rect x="510" y="326" width="62" height="52" rx="9" fill="#e8e8ef" stroke="#7f7f89" stroke-width="2"/>
<rect x="520" y="334" width="32" height="36" rx="7" fill="#9fb4ca" stroke="#7f7f89" stroke-width="2"/>
<rect x="560" y="322" width="200" height="60" rx="10" fill="#9fb4ca"/>
<path d="M570,322 L620,322 L620,382 L570,382 Q560,382 560,372 L560,332 Q560,322 570,322 Z" fill="rgba(0,0,0,0.06)"/>
<path d="M619.25,323 V381" stroke="rgba(0,0,0,0.12)" stroke-width="1.5"/>
<g fill="#fff"><rect x="577" y="338.7" width="15.5" height="9.3"/><rect x="577" y="356" width="15.5" height="9.3"/><path d="M587.8,327.5 L602.2,352 L587.8,376.5 L587.8,369 L598,352 L587.8,335 Z"/></g>
<rect x="560" y="322" width="200" height="60" rx="10" fill="none" stroke="#7f7f89" stroke-width="2"/>
<text x="636" y="361.6" font-family="Liberation Sans" font-size="28.5"  fill="#1e2226">inject ¹</text>
<rect x="750.5" y="342.5" width="19" height="19" rx="5.5" fill="#d6d6da" stroke="#7f7f89" stroke-width="2.4"/>
<rect x="880" y="322" width="280" height="60" rx="10" fill="#fdfdfe"/>
<path d="M890,322 L940,322 L940,382 L890,382 Q880,382 880,372 L880,332 Q880,322 890,322 Z" fill="#ededf2"/>
<path d="M939.25,323 V381" stroke="#c9c9d1" stroke-width="1.5"/>
<g transform="translate(892.5,334)"><g transform="translate(0,0) scale(1.0)" fill="#d63b2c"><path d="M0,3 Q0,0 3,0 L33,0 Q36,0 36,3 L36,11 C28,11 22,14 18,16 C14,18 10,18.3 0,18.3 Z"/><path d="M36,17.4 C30,17.4 24,19.6 20,21.6 C24,23.6 30,25.8 36,25.8 Z"/><path d="M0,24.4 L8,24.4 C13,24.4 16,26 20,28 C24,30 28,32 36,32 L36,33 Q36,36 33,36 L3,36 Q0,36 0,33 Z"/></g></g>
<rect x="880" y="322" width="280" height="60" rx="10" fill="none" stroke="#7f7f89" stroke-width="2"/>
<text x="956" y="361.6" font-family="Liberation Sans" font-size="28" font-style="italic" fill="#1e2226">Create Table</text>
<rect x="870.5" y="342.5" width="19" height="19" rx="5.5" fill="#d6d6da" stroke="#7f7f89" stroke-width="2.4"/>
<rect x="1150.5" y="342.5" width="19" height="19" rx="5.5" fill="#d6d6da" stroke="#7f7f89" stroke-width="2.4"/>
<rect x="1508" y="326" width="63" height="52" rx="9" fill="#e8e8ef" stroke="#7f7f89" stroke-width="2"/>
<rect x="1530" y="334" width="32" height="36" rx="7" fill="#7a9b6b" stroke="#7f7f89" stroke-width="2"/>
<rect x="1280" y="322" width="240" height="60" rx="10" fill="#7a9b6b"/>
<path d="M1460,322 L1510,322 Q1520,322 1520,332 L1520,372 Q1520,382 1510,382 L1460,382 Z" fill="rgba(0,0,0,0.06)"/>
<path d="M1460.5,323 V381" stroke="rgba(0,0,0,0.12)" stroke-width="1.2" stroke-dasharray="1.2 2"/>
<g fill="#fff"><rect x="1480" y="335.5" width="20" height="3"/><rect x="1480" y="343.5" width="20" height="3"/><rect x="1480" y="351.5" width="20" height="3"/><rect x="1480" y="359.5" width="20" height="3"/><rect x="1480" y="367.5" width="20" height="3"/></g>
<rect x="1280" y="322" width="240" height="60" rx="10" fill="none" stroke="#7f7f89" stroke-width="2"/>
<text x="1442" y="361.6" text-anchor="end" font-family="Liberation Sans" font-size="28.5" font-style="italic" fill="#1e2226">debug 1</text>
<rect x="1270.5" y="342.5" width="19" height="19" rx="5.5" fill="#d6d6da" stroke="#7f7f89" stroke-width="2.4"/>
<rect x="1680" y="322" width="240" height="60" rx="10" fill="#df7e76"/>
<path d="M1690,322 L1740,322 L1740,382 L1690,382 Q1680,382 1680,372 L1680,332 Q1680,322 1690,322 Z" fill="rgba(0,0,0,0.07)"/>
<path d="M1739.25,323 V381" stroke="rgba(0,0,0,0.12)" stroke-width="1.5"/>
<g fill="#fff"><path d="M1703.5,330.5 L1716.5,330.5 L1714,359 L1706,359 Z"/><rect x="1705" y="364" width="10" height="9.5" rx="1"/></g>
<rect x="1680" y="322" width="240" height="60" rx="10" fill="none" stroke="#7f7f89" stroke-width="2"/>
<text x="1756" y="361.6" font-family="Liberation Sans" font-size="28.8"  fill="#1e2226">catch: all</text>
<rect x="1910.5" y="342.5" width="19" height="19" rx="5.5" fill="#d6d6da" stroke="#7f7f89" stroke-width="2.4"/>
<rect x="2308" y="326" width="63" height="52" rx="9" fill="#e8e8ef" stroke="#7f7f89" stroke-width="2"/>
<rect x="2330" y="334" width="32" height="36" rx="7" fill="#7a9b6b" stroke="#7f7f89" stroke-width="2"/>
<rect x="2080" y="322" width="240" height="60" rx="10" fill="#7a9b6b"/>
<path d="M2260,322 L2310,322 Q2320,322 2320,332 L2320,372 Q2320,382 2310,382 L2260,382 Z" fill="rgba(0,0,0,0.06)"/>
<path d="M2260.5,323 V381" stroke="rgba(0,0,0,0.12)" stroke-width="1.2" stroke-dasharray="1.2 2"/>
<g fill="#fff"><rect x="2280" y="335.5" width="20" height="3"/><rect x="2280" y="343.5" width="20" height="3"/><rect x="2280" y="351.5" width="20" height="3"/><rect x="2280" y="359.5" width="20" height="3"/><rect x="2280" y="367.5" width="20" height="3"/></g>
<rect x="2080" y="322" width="240" height="60" rx="10" fill="none" stroke="#7f7f89" stroke-width="2"/>
<text x="2242" y="361.6" text-anchor="end" font-family="Liberation Sans" font-size="28.5" font-style="italic" fill="#1e2226">debug 6</text>
<rect x="2070.5" y="342.5" width="19" height="19" rx="5.5" fill="#d6d6da" stroke="#7f7f89" stroke-width="2.4"/>
<rect x="510" y="526" width="62" height="52" rx="9" fill="#e8e8ef" stroke="#7f7f89" stroke-width="2"/>
<rect x="520" y="534" width="32" height="36" rx="7" fill="#9fb4ca" stroke="#7f7f89" stroke-width="2"/>
<rect x="560" y="522" width="400" height="60" rx="10" fill="#9fb4ca"/>
<path d="M570,522 L620,522 L620,582 L570,582 Q560,582 560,572 L560,532 Q560,522 570,522 Z" fill="rgba(0,0,0,0.06)"/>
<path d="M619.25,523 V581" stroke="rgba(0,0,0,0.12)" stroke-width="1.5"/>
<g fill="#fff"><rect x="577" y="538.7" width="15.5" height="9.3"/><rect x="577" y="556" width="15.5" height="9.3"/><path d="M587.8,527.5 L602.2,552 L587.8,576.5 L587.8,569 L598,552 L587.8,535 Z"/></g>
<rect x="560" y="522" width="400" height="60" rx="10" fill="none" stroke="#7f7f89" stroke-width="2"/>
<text x="636" y="561.6" font-family="Liberation Sans" font-size="28" font-style="italic" fill="#1e2226">Insert simulated Data</text>
<rect x="950.5" y="542.5" width="19" height="19" rx="5.5" fill="#d6d6da" stroke="#7f7f89" stroke-width="2.4"/>
<rect x="1040" y="522" width="560" height="60" rx="10" fill="#f9c998"/>
<path d="M1050,522 L1100,522 L1100,582 L1050,582 Q1040,582 1040,572 L1040,532 Q1040,522 1050,522 Z" fill="rgba(0,0,0,0.06)"/>
<path d="M1099.25,523 V581" stroke="rgba(0,0,0,0.12)" stroke-width="1.5"/>
<path d="M1085,534 C1083,529 1075,529 1073.5,538 L1069.5,565 C1068,574 1061,574 1059,569.5 M1062,552.5 H1080" stroke="#fff" stroke-width="3.6" fill="none" stroke-linecap="round"/>
<rect x="1040" y="522" width="560" height="60" rx="10" fill="none" stroke="#7f7f89" stroke-width="2"/>
<text x="1116" y="561.6" font-family="Liberation Sans" font-size="27.8" font-style="italic" fill="#1e2226">Generate last 7 days sensor data</text>
<rect x="1030.5" y="542.5" width="19" height="19" rx="5.5" fill="#d6d6da" stroke="#7f7f89" stroke-width="2.4"/>
<rect x="1590.5" y="542.5" width="19" height="19" rx="5.5" fill="#d6d6da" stroke="#7f7f89" stroke-width="2.4"/>
<rect x="1680" y="522" width="200" height="60" rx="10" fill="#fdfdfe"/>
<path d="M1690,522 L1740,522 L1740,582 L1690,582 Q1680,582 1680,572 L1680,532 Q1680,522 1690,522 Z" fill="#ededf2"/>
<path d="M1739.25,523 V581" stroke="#c9c9d1" stroke-width="1.5"/>
<g transform="translate(1692.5,534)"><g transform="translate(0,0) scale(1.0)" fill="#d63b2c"><path d="M0,3 Q0,0 3,0 L33,0 Q36,0 36,3 L36,11 C28,11 22,14 18,16 C14,18 10,18.3 0,18.3 Z"/><path d="M36,17.4 C30,17.4 24,19.6 20,21.6 C24,23.6 30,25.8 36,25.8 Z"/><path d="M0,24.4 L8,24.4 C13,24.4 16,26 20,28 C24,30 28,32 36,32 L36,33 Q36,36 33,36 L3,36 Q0,36 0,33 Z"/></g></g>
<rect x="1680" y="522" width="200" height="60" rx="10" fill="none" stroke="#7f7f89" stroke-width="2"/>
<text x="1756" y="561.6" font-family="Liberation Sans" font-size="28"  fill="#1e2226">query</text>
<rect x="1670.5" y="542.5" width="19" height="19" rx="5.5" fill="#d6d6da" stroke="#7f7f89" stroke-width="2.4"/>
<rect x="1870.5" y="542.5" width="19" height="19" rx="5.5" fill="#d6d6da" stroke="#7f7f89" stroke-width="2.4"/>
<rect x="2308" y="526" width="63" height="52" rx="9" fill="#e8e8ef" stroke="#7f7f89" stroke-width="2"/>
<rect x="2330" y="534" width="32" height="36" rx="7" fill="#7a9b6b" stroke="#7f7f89" stroke-width="2"/>
<rect x="2080" y="522" width="240" height="60" rx="10" fill="#7a9b6b"/>
<path d="M2260,522 L2310,522 Q2320,522 2320,532 L2320,572 Q2320,582 2310,582 L2260,582 Z" fill="rgba(0,0,0,0.06)"/>
<path d="M2260.5,523 V581" stroke="rgba(0,0,0,0.12)" stroke-width="1.2" stroke-dasharray="1.2 2"/>
<g fill="#fff"><rect x="2280" y="535.5" width="20" height="3"/><rect x="2280" y="543.5" width="20" height="3"/><rect x="2280" y="551.5" width="20" height="3"/><rect x="2280" y="559.5" width="20" height="3"/><rect x="2280" y="567.5" width="20" height="3"/></g>
<rect x="2080" y="522" width="240" height="60" rx="10" fill="none" stroke="#7f7f89" stroke-width="2"/>
<text x="2242" y="561.6" text-anchor="end" font-family="Liberation Sans" font-size="28.5" font-style="italic" fill="#1e2226">debug 2</text>
<rect x="2070.5" y="542.5" width="19" height="19" rx="5.5" fill="#d6d6da" stroke="#7f7f89" stroke-width="2.4"/>
<rect x="470" y="766" width="62" height="52" rx="9" fill="#e8e8ef" stroke="#7f7f89" stroke-width="2"/>
<rect x="480" y="774" width="32" height="36" rx="7" fill="#9fb4ca" stroke="#7f7f89" stroke-width="2"/>
<rect x="520" y="762" width="240" height="60" rx="10" fill="#9fb4ca"/>
<path d="M530,762 L580,762 L580,822 L530,822 Q520,822 520,812 L520,772 Q520,762 530,762 Z" fill="rgba(0,0,0,0.06)"/>
<path d="M579.25,763 V821" stroke="rgba(0,0,0,0.12)" stroke-width="1.5"/>
<g fill="#fff"><rect x="537" y="778.7" width="15.5" height="9.3"/><rect x="537" y="796" width="15.5" height="9.3"/><path d="M547.8,767.5 L562.2,792 L547.8,816.5 L547.8,809 L558,792 L547.8,775 Z"/></g>
<rect x="520" y="762" width="240" height="60" rx="10" fill="none" stroke="#7f7f89" stroke-width="2"/>
<text x="596" y="801.6" font-family="Liberation Sans" font-size="28.8"  fill="#1e2226">timestamp</text>
<rect x="750.5" y="782.5" width="19" height="19" rx="5.5" fill="#d6d6da" stroke="#7f7f89" stroke-width="2.4"/>
<rect x="840" y="762" width="200" height="60" rx="10" fill="#fdfdfe"/>
<path d="M850,762 L900,762 L900,822 L850,822 Q840,822 840,812 L840,772 Q840,762 850,762 Z" fill="#ededf2"/>
<path d="M899.25,763 V821" stroke="#c9c9d1" stroke-width="1.5"/>
<g transform="translate(852.5,774)"><g transform="translate(0,0) scale(1.0)" fill="#d63b2c"><path d="M0,3 Q0,0 3,0 L33,0 Q36,0 36,3 L36,11 C28,11 22,14 18,16 C14,18 10,18.3 0,18.3 Z"/><path d="M36,17.4 C30,17.4 24,19.6 20,21.6 C24,23.6 30,25.8 36,25.8 Z"/><path d="M0,24.4 L8,24.4 C13,24.4 16,26 20,28 C24,30 28,32 36,32 L36,33 Q36,36 33,36 L3,36 Q0,36 0,33 Z"/></g></g>
<rect x="840" y="762" width="200" height="60" rx="10" fill="none" stroke="#e9772a" stroke-width="3.6"/>
<text x="916" y="801.6" font-family="Liberation Sans" font-size="28"  fill="#1e2226">query</text>
<rect x="830.5" y="782.5" width="19" height="19" rx="5.5" fill="#d6d6da" stroke="#7f7f89" stroke-width="2.4"/>
<rect x="1030.5" y="782.5" width="19" height="19" rx="5.5" fill="#d6d6da" stroke="#7f7f89" stroke-width="2.4"/>
<rect x="1388" y="766" width="63" height="52" rx="9" fill="#e8e8ef" stroke="#7f7f89" stroke-width="2"/>
<rect x="1410" y="774" width="32" height="36" rx="7" fill="#7a9b6b" stroke="#7f7f89" stroke-width="2"/>
<rect x="1160" y="762" width="240" height="60" rx="10" fill="#7a9b6b"/>
<path d="M1340,762 L1390,762 Q1400,762 1400,772 L1400,812 Q1400,822 1390,822 L1340,822 Z" fill="rgba(0,0,0,0.06)"/>
<path d="M1340.5,763 V821" stroke="rgba(0,0,0,0.12)" stroke-width="1.2" stroke-dasharray="1.2 2"/>
<g fill="#fff"><rect x="1360" y="775.5" width="20" height="3"/><rect x="1360" y="783.5" width="20" height="3"/><rect x="1360" y="791.5" width="20" height="3"/><rect x="1360" y="799.5" width="20" height="3"/><rect x="1360" y="807.5" width="20" height="3"/></g>
<rect x="1160" y="762" width="240" height="60" rx="10" fill="none" stroke="#7f7f89" stroke-width="2"/>
<text x="1322" y="801.6" text-anchor="end" font-family="Liberation Sans" font-size="28.5" font-style="italic" fill="#1e2226">debug 3</text>
<rect x="1150.5" y="782.5" width="19" height="19" rx="5.5" fill="#d6d6da" stroke="#7f7f89" stroke-width="2.4"/>
<rect x="892" y="384" width="140" height="28" fill="#fbfbfd"/>
<rect x="895.5" y="387.4" width="23.4" height="23.2" rx="5.5" fill="#4f93dc"/>
<text x="926" y="408" font-family="Liberation Sans" font-size="23.5" fill="#6d7078" stroke="#6d7078" stroke-width="0.6">Queue: 0</text>
<rect x="1692" y="584" width="140" height="28" fill="#fbfbfd"/>
<rect x="1695.5" y="587.4" width="23.4" height="23.2" rx="5.5" fill="#4f93dc"/>
<text x="1726" y="608" font-family="Liberation Sans" font-size="23.5" fill="#6d7078" stroke="#6d7078" stroke-width="0.6">Queue: 0</text>
<rect x="852" y="824" width="140" height="28" fill="#fbfbfd"/>
<rect x="855.5" y="827.4" width="23.4" height="23.2" rx="5.5" fill="#4f93dc"/>
<text x="886" y="848" font-family="Liberation Sans" font-size="23.5" fill="#6d7078" stroke="#6d7078" stroke-width="0.6">Queue: 0</text>
<path d="M1650,1449 V1479 M1635,1464 H1665" stroke="#fff" stroke-width="6"/><path d="M1650,1451 V1477 M1637,1464 H1663" stroke="#111" stroke-width="2.2"/>
</svg>
<div style="position:absolute;left:2354px;top:166px;width:24px;height:1484px;background:#efeff5"></div>
<div style="position:absolute;left:360px;top:1626px;width:2018px;height:24px;background:#efeff5"></div>
<div style="position:absolute;left:2360px;top:174px;width:12px;height:122px;border-radius:6px;background:#6f6f7a"></div>
<div style="position:absolute;left:366px;top:1632px;width:236px;height:12px;border-radius:6px;background:#6f6f7a"></div>

<div style="position:absolute;left:360px;top:1650px;width:2018px;height:2px;background:#a3a3ad"></div>
<div style="position:absolute;left:360px;top:1652px;width:2018px;height:50px;background:#efeff5"></div>
<div style="position:absolute;left:380px;top:1658px;width:38px;height:38px;box-sizing:border-box;border:2px solid #a3a3ad;background:#fafafd"></div>
<svg style="position:absolute;left:386px;top:1664px" width="26" height="26" viewBox="0 0 26 26"><circle cx="11" cy="11" r="7" fill="none" stroke="#676a73" stroke-width="3.4"/><path d="M16,16 L21.5,21.5" stroke="#676a73" stroke-width="3.6" stroke-linecap="round"/></svg>
<div style="position:absolute;left:1964.5px;top:1658px;width:225px;height:38px;box-sizing:border-box;border:2px solid #a3a3ad;background:#fafafd"></div>
<svg style="position:absolute;left:1970px;top:1665px" width="26" height="26" viewBox="0 0 26 26"><path d="M13,2.5 L22.5,7.5 L22.5,18 L13,23 L3.5,18 L3.5,7.5 Z" fill="none" stroke="#676a73" stroke-width="2.4" stroke-linejoin="round"/><path d="M3.5,7.5 L13,12.5 L22.5,7.5 M13,12.5 L13,23" fill="none" stroke="#676a73" stroke-width="2.4"/><path d="M3.5,7.5 L13,12.5 L13,23 L3.5,18 Z" fill="#676a73"/></svg>
<div style="position:absolute;left:2002px;top:1657px;height:40px;font:24px 'Liberation Sans', sans-serif;line-height:40px;color:#6c6f78;white-space:nowrap">Update available</div>
<div style="position:absolute;left:2198.5px;top:1658px;width:37px;height:38px;box-sizing:border-box;border:2px solid #a3a3ad;background:#fafafd"></div>
<svg style="position:absolute;left:2203px;top:1665px" width="28" height="26" viewBox="0 0 28 26"><path d="M3,6 L10,3 L18,6 L25,3 L25,20 L18,23 L10,20 L3,23 Z M10,3 L10,20 M18,6 L18,23" fill="none" stroke="#676a73" stroke-width="2"/></svg>
<div style="position:absolute;left:2244.5px;top:1658px;width:113px;height:38px;box-sizing:border-box;border:2px solid #a3a3ad;background:#fafafd"></div>
<div style="position:absolute;left:2280px;top:1658px;width:2px;height:38px;background:#a3a3ad"></div>
<div style="position:absolute;left:2318px;top:1658px;width:2px;height:38px;background:#a3a3ad"></div>
<div style="position:absolute;left:2253px;top:1674px;width:19px;height:5px;border-radius:1px;background:#676a73"></div>
<div style="position:absolute;left:2290.5px;top:1667px;width:20px;height:20px;box-sizing:border-box;border:3.2px solid #676a73;border-radius:50%"></div>
<svg style="position:absolute;left:2327px;top:1667px" width="21" height="21" viewBox="0 0 21 21"><path d="M10.5,1.5 V19.5 M1.5,10.5 H19.5" stroke="#676a73" stroke-width="4.6"/></svg>

<div style="position:absolute;left:2378px;top:94px;width:2px;height:1608px;background:#a3a3ad"></div>
<div style="position:absolute;left:2380px;top:94px;width:14px;height:1608px;background:#efeff5"></div>
<div style="position:absolute;left:2394px;top:94px;width:2px;height:1608px;background:#a3a3ad"></div>
<div style="position:absolute;left:2384px;top:844px;width:6px;height:100px;background:#ababb3"></div>

<div style="position:absolute;left:2396px;top:94px;width:628px;height:70px;background:#fafafd"></div>
<div style="position:absolute;left:2396px;top:164px;width:628px;height:2px;background:#a3a3ad"></div>
<div style="position:absolute;left:2402px;top:102px;width:265px;height:64px;box-sizing:border-box;border:2px solid #a3a3ad;border-bottom:none;background:#fbfbfd"></div>
<svg style="position:absolute;left:2428px;top:120px" width="26" height="26" viewBox="0 0 26 26" fill="#8a8e93"><path d="M8,7 Q8,1.5 13,1.5 Q18,1.5 18,7 Z"/><path d="M6,9 L12,9 L12,25 Q6,24 5.5,17 Z M14,9 L20,9 L20.5,17 Q20,24 14,25 Z"/><path d="M1.5,5 L6,9.5 M24.5,5 L20,9.5 M0.5,14 L5.5,14 M25.5,14 L20.5,14 M1.5,24 L6,19.5 M24.5,24 L20,19.5" stroke="#8a8e93" stroke-width="2" fill="none"/></svg>
<div style="position:absolute;left:2464px;top:115px;height:40px;font:bold 27.5px 'Liberation Sans', sans-serif;line-height:40px;color:#4b535e">debug</div>

<div style="position:absolute;left:2688px;top:104px;width:56px;height:56px;box-sizing:border-box;border:2px solid #a3a3ad;background:#fafafd"></div>
<div style="position:absolute;left:2756px;top:104px;width:56px;height:56px;box-sizing:border-box;border:2px solid #a3a3ad;background:#fafafd"></div>
<div style="position:absolute;left:2824px;top:104px;width:56px;height:56px;box-sizing:border-box;border:2px solid #a3a3ad;background:#e5e5ee"></div>
<div style="position:absolute;left:2892px;top:104px;width:56px;height:56px;box-sizing:border-box;border:2px solid #a3a3ad;background:#fafafd"></div>
<div style="position:absolute;left:2824px;top:156px;width:56px;height:4px;background:#9c9ca6"></div>
<svg style="position:absolute;left:2700px;top:116px" width="32" height="30" viewBox="0 0 32 30" fill="#60646d"><rect x="13.2" y="4" width="5.6" height="4.6" rx="1"/><path d="M11.5,12 L18.8,12 L18.8,22 L21,22 L21,25.8 L11,25.8 L11,22 L13.2,22 L13.2,15.5 L11.5,15.5 Z"/></svg>
<svg style="position:absolute;left:2768px;top:118px" width="32" height="30" viewBox="0 0 32 30"><path d="M10,2.7 H25.5 Q27.3,2.7 26.8,4.6 L21.6,19.6 H6.5 Q4.2,19.6 3.6,21.6 Z" fill="#60646d"/><path d="M6.5,19.6 Q3,19.8 3,22.6 Q3,25.4 6.2,25.4 H23.2 L28.6,7.6" fill="none" stroke="#60646d" stroke-width="2.4"/><path d="M12,7.6 H22.2 M10.8,11.2 H21" stroke="#fafafd" stroke-width="1.9"/></svg>
<svg style="position:absolute;left:2836px;top:118px" width="32" height="30" viewBox="0 0 32 30" fill="#5b6069"><path d="M10,8 Q10,1.5 16,1.5 Q22,1.5 22,8 Z"/><path d="M8,10 L15,10 L15,28 Q7.5,27 7,19 Z M17,10 L24,10 L25,19 Q24.5,27 17,28 Z"/><path d="M2.5,5 L8,10.5 M29.5,5 L24,10.5 M1.5,16 L7,16 M30.5,16 L25,16 M2.5,27.5 L8,22 M29.5,27.5 L24,22" stroke="#5b6069" stroke-width="2.6" fill="none"/></svg>
<svg style="position:absolute;left:2904px;top:117px" width="32" height="32" viewBox="0 0 32 32"><g fill="#60646d"><circle cx="16" cy="16" r="9.5"/>
<rect x="13" y="3" width="6" height="6" rx="1"/><rect x="13" y="23" width="6" height="6" rx="1"/><rect x="3" y="13" width="6" height="6" rx="1"/><rect x="23" y="13" width="6" height="6" rx="1"/>
<rect x="13" y="3" width="6" height="6" rx="1" transform="rotate(45 16 16)"/><rect x="13" y="23" width="6" height="6" rx="1" transform="rotate(45 16 16)"/><rect x="3" y="13" width="6" height="6" rx="1" transform="rotate(45 16 16)"/><rect x="23" y="13" width="6" height="6" rx="1" transform="rotate(45 16 16)"/></g><circle cx="16" cy="16" r="4.5" fill="#fafafd"/></svg>
<svg style="position:absolute;left:2978px;top:127px" width="19" height="11"><path d="M0.5,0.5 L18,0.5 L9.25,10 Z" fill="#60646d"/></svg>

<div style="position:absolute;left:2396px;top:166px;width:628px;height:82px;background:#efeff5"></div>
<div style="position:absolute;left:2396px;top:248px;width:628px;height:2px;background:#a3a3ad"></div>
<div style="position:absolute;left:2648.5px;top:182px;width:193px;height:50px;box-sizing:border-box;border:2px solid #a3a3ad;background:#fafafd"></div>
<svg style="position:absolute;left:2664px;top:196px" width="22" height="24" viewBox="0 0 22 24"><path d="M1,1 L21,1 L13.5,10 L13.5,22 L8.5,19 L8.5,10 Z" fill="#676a73"/></svg>
<div style="position:absolute;left:2693px;top:187px;height:40px;font:26px 'Liberation Sans', sans-serif;line-height:40px;color:#676a73;white-space:nowrap">all nodes</div>
<svg style="position:absolute;left:2814px;top:202px" width="16" height="10"><path d="M0.5,0.5 L15.5,0.5 L8,9 Z" fill="#676a73"/></svg>
<div style="position:absolute;left:2862.5px;top:182px;width:119px;height:50px;box-sizing:border-box;border:2px solid #a3a3ad;background:#fafafd"></div>
<svg style="position:absolute;left:2878px;top:194px" width="20" height="26" viewBox="0 0 20 26" fill="#676a73"><rect x="1" y="4" width="18" height="3"/><rect x="6" y="1" width="8" height="3"/><path d="M3,8 L17,8 L16,25 L4,25 Z"/><path d="M7.5,11 V22 M12.5,11 V22" stroke="#fafafd" stroke-width="1.6"/></svg>
<div style="position:absolute;left:2906px;top:187px;height:40px;font:26px 'Liberation Sans', sans-serif;line-height:40px;color:#676a73">all</div>
<svg style="position:absolute;left:2955px;top:202px" width="16" height="10"><path d="M0.5,0.5 L15.5,0.5 L8,9 Z" fill="#676a73"/></svg>

<div style="position:absolute;left:2396px;top:250px;width:628px;height:1400px;background:#fafafc"></div>
<div style="position:absolute;left:2396px;top:1650px;width:628px;height:2px;background:#a3a3ad"></div>
<div style="position:absolute;left:2396px;top:1652px;width:628px;height:50px;background:#efeff5"></div>
<div style="position:absolute;left:2972px;top:1658.5px;width:38px;height:37px;box-sizing:border-box;border:2px solid #a3a3ad;background:#fafafd"></div>
<svg style="position:absolute;left:2977px;top:1664px" width="28" height="26" viewBox="0 0 28 26" fill="#676a73"><path d="M3,4 Q3,2 5,2 L23,2 Q25,2 25,4 L25,17 Q25,19 23,19 L5,19 Q3,19 3,17 Z M5.5,4.5 L5.5,15 L22.5,15 L22.5,4.5 Z" fill-rule="evenodd"/><rect x="11" y="19" width="6" height="3"/><rect x="8.5" y="21.5" width="11" height="2.5"/></svg>
<div style="position:absolute;left:3022px;top:94px;width:2px;height:1608px;background:#a3a3ad"></div>

<div style="position:absolute;left:0;top:94px;width:3024px;height:2px;background:#a9a9b2"></div>
</body></html>
